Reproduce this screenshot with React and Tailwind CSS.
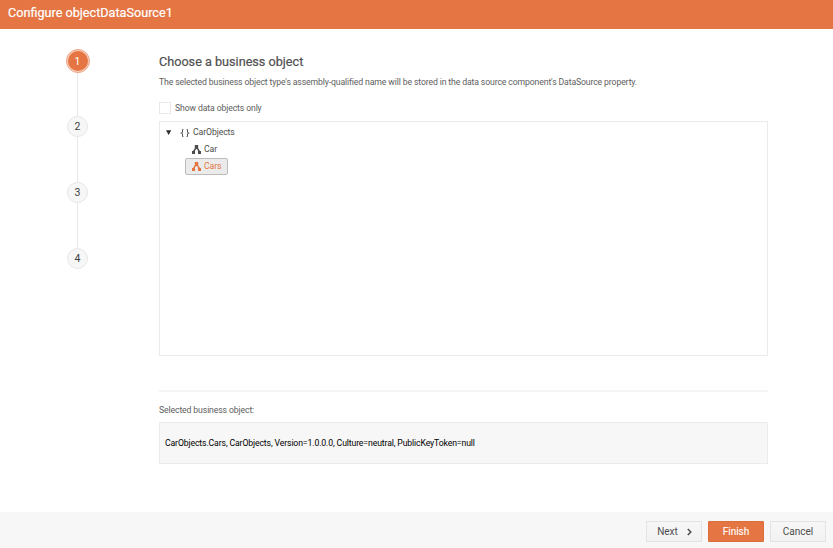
import React from "react";

function Hierarchy() {
  return (
    <svg width="9" height="9" viewBox="0 0 9 9" className="ml-px shrink-0">
      <path d="M2.8 0h3.4v4h-3.4z M0 6h3v3h-3z M6 6h3v3h-3z" fill="currentColor" />
      <path d="M3.5 3.6L1.7 6.2 M5.5 3.6L7.3 6.2" stroke="currentColor" strokeWidth="1.5" fill="none" />
    </svg>
  );
}

function Step({ n, line = "h-[45px]" }) {
  return (
    <>
      <div className={`${line} w-[1.5px] bg-[#e8e8e8]`} />
      <div className="flex h-[21px] w-[21px] items-center justify-center rounded-full border border-[#e6e6e6] bg-[#f7f7f7] pt-[2px] text-[10.5px] leading-none text-[#404040]">
        {n}
      </div>
    </>
  );
}

export default function App() {
  return (
    <div className="flex h-[548px] w-[833px] flex-col overflow-hidden whitespace-nowrap bg-white font-['Roboto',sans-serif] text-[#606060]">
      <header className="flex h-[29px] shrink-0 items-center border-b border-[#e27947] bg-[#e57542] pb-[2px] pl-2 text-[12.65px] leading-none text-white [-webkit-text-stroke:0.2px_currentColor]">
        <span>Configure objectDataSource1</span>
      </header>
      <div className="flex flex-1">
        <nav className="flex w-[155px] shrink-0 flex-col items-center pt-5">
          <div className="flex h-6 w-6 items-center justify-center rounded-full border border-[#eda583] bg-[#f6cdb9]">
            <div className="flex h-5 w-5 items-center justify-center rounded-full bg-[#e57542] pt-[2px] text-[10.5px] leading-none text-white">
              1
            </div>
          </div>
          <Step n="2" line="h-[43px]" />
          <Step n="3" />
          <Step n="4" />
        </nav>
        <main className="ml-1 flex w-[609px] flex-col">
          <h1 className="mt-[25px] h-4 text-[12.65px] font-normal leading-4 text-[#505050] [-webkit-text-stroke:0.2px_currentColor]">
            <span>Choose a business object</span>
          </h1>
          <p className="mt-[6px] h-3 text-[8.7px] leading-3 tracking-[-0.135px]">
            <span>The selected business object type's assembly-qualified name will be stored in the data source component's DataSource property.</span>
          </p>
          <label className="mt-[14px] flex h-3 items-center text-[8.7px] leading-3 tracking-[-0.13px]">
            <span className="mr-1 h-3 w-3 border border-[#e9e9e9] bg-white" />
            <span>Show data objects only</span>
          </label>
          <div className="mt-[7px] h-[235px] border border-[#ebebeb] pt-[2px] text-[8.7px] tracking-[-0.1px] text-[#4d4d4d]">
            <div className="flex h-[17px] items-center pl-[6px] pt-px">
              <svg width="5" height="6" viewBox="0 0 5 6" className="mr-[9px]">
                <path d="M0 .3h5.2L2.6 5z" fill="#2f2f2f" />
              </svg>
              <svg width="10" height="8" viewBox="0 0 10 8" className="mb-px mr-[3px]" fill="none" stroke="#555" strokeWidth="1">
                <path d="M3.4 .5H2.5V3L1.5 4l1 1v2.5h.9M6.6 .5h.9V3l1 1-1 1v2.5h-.9" />
                <path d="M.5 4h2M7.5 4h2" strokeWidth=".8" />
              </svg>
              <span>CarObjects</span>
            </div>
            <div className="flex h-[17px] items-center gap-[3px] pl-[31px]">
              <Hierarchy />
              <span>Car</span>
            </div>
            <div className="ml-[25px] flex h-[17px] w-[43px] items-center gap-[3px] rounded-[2px] border border-[#bcbcbc] bg-[#ebebeb] pl-[5px] text-[#e57542]">
              <Hierarchy />
              <span>Cars</span>
            </div>
          </div>
          <div className="mt-[34px] h-[2px] shrink-0 bg-[#f5f5f5]" />
          <div className="mt-3 h-3 text-[8.7px] leading-3 tracking-[-0.13px]">
            <span>Selected business object:</span>
          </div>
          <div className="mt-[6px] flex h-[42px] items-center border border-[#ebebeb] bg-[#f7f7f7] pl-[5px] pt-px text-[8.7px] tracking-[-0.13px] text-black">
            <span>CarObjects.Cars, CarObjects, Version=1.0.0.0, Culture=neutral, PublicKeyToken=null</span>
          </div>
        </main>
      </div>
      <footer className="flex h-9 shrink-0 items-center justify-end gap-[6px] bg-[#f7f7f7] pr-[7px] pt-[3px] text-[10px] leading-none text-[#4d4d4d]">
        <button className="flex h-[21px] w-14 items-center justify-center gap-[9px] border border-[#e3e3e3] bg-gradient-to-b from-[#f7f7f7] to-[#f2f2f2] pl-px">
          <span>Next</span>
          <svg width="5" height="8" viewBox="0 0 5 8" fill="none" stroke="#4d4d4d" strokeWidth="1.5">
            <path d="M.8 1l3 3-3 3" />
          </svg>
        </button>
        <button className="flex h-[21px] w-14 items-center justify-center rounded-[1px] border border-[#db6d3b] bg-[#e57542] text-white [-webkit-text-stroke:0.1px_currentColor]">
          <span>Finish</span>
        </button>
        <button className="flex h-[21px] w-14 items-center justify-center border border-[#e3e3e3] bg-gradient-to-b from-[#f7f7f7] to-[#f2f2f2]">
          <span>Cancel</span>
        </button>
      </footer>
    </div>
  );
}
